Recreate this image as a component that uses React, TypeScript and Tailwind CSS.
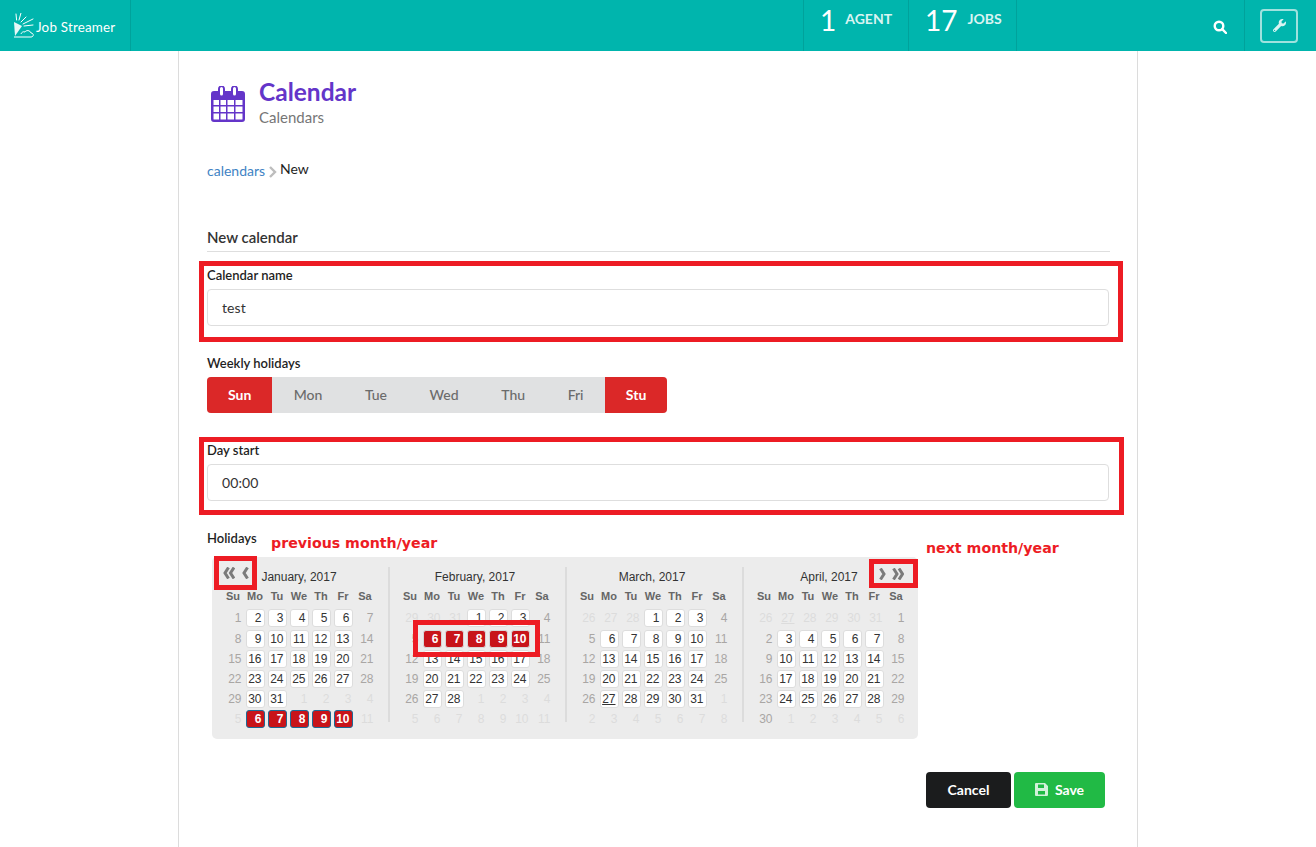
import { FaWrench } from "react-icons/fa";

const weekdays = ["Su", "Mo", "Tu", "We", "Th", "Fr", "Sa"];

type Day = { n: number; kind: "off" | "weekend" | "open" | "selected" | "selected-plain" | "today" | "faint-today" };

const off = (...ns: number[]): Day[] => ns.map((n) => ({ n, kind: "off" }));
const we = (n: number): Day => ({ n, kind: "weekend" });
const open = (...ns: number[]): Day[] => ns.map((n) => ({ n, kind: "open" }));
const sel = (...ns: number[]): Day[] => ns.map((n) => ({ n, kind: "selected" }));
const selPlain = (...ns: number[]): Day[] => ns.map((n) => ({ n, kind: "selected-plain" }));

const months: { title: string; shift: string; rows: Day[][] }[] = [
  {
    title: "January, 2017",
    shift: "",
    rows: [
      [we(1), ...open(2, 3, 4, 5, 6), we(7)],
      [we(8), ...open(9, 10, 11, 12, 13), we(14)],
      [we(15), ...open(16, 17, 18, 19, 20), we(21)],
      [we(22), ...open(23, 24, 25, 26, 27), we(28)],
      [we(29), ...open(30, 31), ...off(1, 2, 3, 4)],
      [...off(5), ...sel(6, 7, 8, 9, 10), ...off(11)],
    ],
  },
  {
    title: "February, 2017",
    shift: "-translate-x-[1px]",
    rows: [
      [...off(29, 30, 31), ...open(1, 2, 3), we(4)],
      [we(5), ...selPlain(6, 7, 8, 9, 10), we(11)],
      [we(12), ...open(13, 14, 15, 16, 17), we(18)],
      [we(19), ...open(20, 21, 22, 23, 24), we(25)],
      [we(26), ...open(27, 28), ...off(1, 2, 3, 4)],
      off(5, 6, 7, 8, 9, 10, 11),
    ],
  },
  {
    title: "March, 2017",
    shift: "-translate-x-[1px]",
    rows: [
      [...off(26, 27, 28), ...open(1, 2, 3), we(4)],
      [we(5), ...open(6, 7, 8, 9, 10), we(11)],
      [we(12), ...open(13, 14, 15, 16, 17), we(18)],
      [we(19), ...open(20, 21, 22, 23, 24), we(25)],
      [we(26), { n: 27, kind: "today" }, ...open(28, 29, 30, 31), ...off(1)],
      off(2, 3, 4, 5, 6, 7, 8),
    ],
  },
  {
    title: "April, 2017",
    shift: "-translate-x-[1px]",
    rows: [
      [...off(26), { n: 27, kind: "faint-today" }, ...off(28, 29, 30, 31), we(1)],
      [we(2), ...open(3, 4, 5, 6, 7), we(8)],
      [we(9), ...open(10, 11, 12, 13, 14), we(15)],
      [we(16), ...open(17, 18, 19, 20, 21), we(22)],
      [we(23), ...open(24, 25, 26, 27, 28), we(29)],
      [we(30), ...off(1, 2, 3, 4, 5, 6)],
    ],
  },
];

function Logo() {
  return (
    <svg width="22" height="25" viewBox="0 0 22 25" fill="none" stroke="white" strokeWidth="1" className="shrink-0">
      <path d="M1 9 L9 13 L2 23 Z" fill="white" stroke="none" opacity="0.9" />
      <path d="M3 1 L3.6 7 M8 0 L6 7 M13 4 L8 9 M20 6 L10 11 M20 12 L11 13" strokeLinecap="round" />
      <path d="M1 24 H18 C21 24 21 20 18 20 C17 17 13 17 12 19 C10 18 8 20 8 21" />
    </svg>
  );
}

function CalendarIcon() {
  return (
    <svg width="34" height="38" viewBox="0 0 34 38" className="shrink-0 text-[#6435c9]">
      <path
        fill="currentColor"
        fillRule="evenodd"
        d="M3 5 H7 V3 a3.5 3.5 0 0 1 7 0 V5 H20 V3 a3.5 3.5 0 0 1 7 0 V5 H31 a3 3 0 0 1 3 3 V33 a3 3 0 0 1 -3 3 H3 a3 3 0 0 1 -3 -3 V8 a3 3 0 0 1 3 -3 Z M9 2.5 V8 a1.5 1.5 0 0 0 3 0 V2.5 a1.5 1.5 0 0 0 -3 0 Z M22 2.5 V8 a1.5 1.5 0 0 0 3 0 V2.5 a1.5 1.5 0 0 0 -3 0 Z M2.5 14 V19 H8 V14 Z M9.5 14 V19 H15 V14 Z M16.5 14 V19 H23 V14 Z M24.5 14 V19 H31.5 V14 Z M2.5 20.5 V26 H8 V20.5 Z M9.5 20.5 V26 H15 V20.5 Z M16.5 20.5 V26 H23 V20.5 Z M24.5 20.5 V26 H31.5 V20.5 Z M2.5 27.5 V33 a0.5 0.5 0 0 0 0.5 0.5 H8 V27.5 Z M9.5 27.5 V33.5 H15 V27.5 Z M16.5 27.5 V33.5 H23 V27.5 Z M24.5 27.5 V33.5 H31 a0.5 0.5 0 0 0 0.5 -0.5 V27.5 Z"
      />
    </svg>
  );
}

function Chevron({ dir, double }: { dir: "left" | "right"; double?: boolean }) {
  const d =
    dir === "left"
      ? double
        ? "M5.5 0.5 L2 6 L5.5 11.5 M11 0.5 L7.5 6 L11 11.5"
        : "M5.5 0.5 L2 6 L5.5 11.5"
      : double
        ? "M1.5 0.5 L5 6 L1.5 11.5 M7 0.5 L10.5 6 L7 11.5"
        : "M1.5 0.5 L5 6 L1.5 11.5";
  return (
    <svg width={double ? 12 : 7} height="12" viewBox={double ? "0 0 12 12" : "0 0 7 12"} fill="none" stroke="#7b7b7b" strokeWidth="3">
      <path d={d} />
    </svg>
  );
}

function DayCell({ day }: { day: Day }) {
  const base = "h-[18px] w-[19px] flex items-center text-[12px] leading-none";
  if (day.kind === "off" || day.kind === "faint-today") {
    return (
      <div className={`${base} mx-auto justify-end pr-[1px] text-[#dcdcdc] ${day.kind === "faint-today" ? "underline" : ""}`}>
        {day.n}
      </div>
    );
  }
  if (day.kind === "weekend") {
    return <div className={`${base} mx-auto justify-end pr-[1px] text-[#a9a6a4]`}>{day.n}</div>;
  }
  if (day.kind === "selected" || day.kind === "selected-plain") {
    return (
      <div
        className={`${base} mx-auto justify-end pr-[2px] rounded-[3px] border bg-[#c8141a] font-bold text-white ${day.kind === "selected" ? "border-[#1d6a96]" : "border-[#d8d8d8]"}`}
      >
        {day.n}
      </div>
    );
  }
  return (
    <div
      className={`${base} mx-auto justify-end pr-[2px] rounded-[3px] border border-[#dddddd] bg-white text-[#333] ${day.kind === "today" ? "underline" : ""}`}
    >
      {day.n}
    </div>
  );
}

function MonthTable({ month, index }: { month: (typeof months)[number]; index: number }) {
  return (
    <div className={`h-[155px] shrink-0 ${index > 0 ? "w-[177px] border-l-2 border-[#dcdcdc] pl-[9px]" : "w-[176px] pl-[10px]"}`}>
      <div className={`h-[20px] w-[154px] text-center text-[12px] leading-[20px] text-[#333] ${month.shift}`}>{month.title}</div>
      <div className="grid h-[20px] grid-cols-[repeat(7,22px)] items-center pb-[2px] text-center text-[11px] font-bold text-[#666]">
        {weekdays.map((w) => (
          <div key={w}>{w}</div>
        ))}
      </div>
      <div className="flex flex-col">
        {month.rows.map((row, i) => (
          <div key={i} className={`grid grid-cols-[repeat(7,22px)] items-center ${i === 0 ? "h-[22px]" : "h-[20px]"}`}>
            {row.map((d, j) => (
              <DayCell key={j} day={d} />
            ))}
          </div>
        ))}
      </div>
    </div>
  );
}

const weeklyDays = [
  { label: "Sun", on: true },
  { label: "Mon", on: false },
  { label: "Tue", on: false },
  { label: "Wed", on: false },
  { label: "Thu", on: false },
  { label: "Fri", on: false },
  { label: "Stu", on: true },
];

export default function App() {
  return (
    <div className="min-h-[847px] overflow-hidden bg-white font-['Lato','Open_Sans',sans-serif] text-[14px] text-[#1f1f1f]">
      {/* 上部ナビ */}
      <header className="flex h-[51px] items-stretch bg-[#00b5ad] text-white">
        <div className="flex w-[131px] items-center gap-[1px] border-r border-[#00a29b] pl-[13px] text-[13.4px] tracking-[0.2px]">
          <Logo />
          <span className="pt-[3px]">Job Streamer</span>
        </div>
        <div className="ml-[672px] flex">
          <div className="flex w-[106px] items-start gap-[9px] border-x border-[#00a29b] pl-[16px]">
            <span className="text-[28px] leading-[40px]">1</span>
            <span className="pt-[10px] text-[14px] font-bold leading-[18px] text-[#d9f4f2]">AGENT</span>
          </div>
          <div className="flex w-[108px] items-start gap-[10px] border-r border-[#00a29b] pl-[16px]">
            <span className="text-[28px] leading-[40px]">17</span>
            <span className="pt-[10px] text-[14px] font-bold leading-[18px] text-[#d9f4f2]">JOBS</span>
          </div>
        </div>
        <div className="flex w-[227px] items-center justify-end pr-[17px] pt-[3px]">
          <svg width="14" height="14" viewBox="0 0 14 14" fill="none" stroke="white" strokeWidth="2.4">
            <circle cx="6" cy="6" r="4.3" />
            <path d="M9.2 9.2 L13 13" strokeLinecap="round" />
          </svg>
        </div>
        <div className="flex flex-1 items-center border-l border-[#00a29b] pl-[15px]">
          <div className="flex h-[34px] w-[38px] items-center justify-center rounded-[4px] border-2 border-[#9fe2de]">
            <FaWrench size={13} className="text-[#d9f4f2]" />
          </div>
        </div>
      </header>

      {/* 本体 */}
      <main className="relative ml-[178px] h-[796px] w-[960px] border-x border-[#dcdcdc] pl-[28px] pr-[28px]">
        <div className="flex items-start gap-[14px] pl-[4px] pt-[35px]">
          <CalendarIcon />
          <div className="-mt-[9px]">
            <h1 className="text-[24.5px] font-bold leading-[30px] text-[#6435c9]">Calendar</h1>
            <p className="text-[15px] leading-[20px] text-[#767676]">Calendars</p>
          </div>
        </div>

        <div className="mt-[34px] flex items-center text-[14px] leading-[20px]">
          <a className="text-[#4183c4]">calendars</a>
          <svg width="9" height="12" viewBox="0 0 9 12" fill="none" stroke="#bdbdbd" strokeWidth="2.4" className="ml-[3px] mr-[3px] mt-[1px]">
            <path d="M2 1 L7 6 L2 11" />
          </svg>
          <span className="-mt-[4px] text-[#1f1f1f]">New</span>
        </div>

        <h2 className="mt-[45px] w-[903px] border-b border-[#dedede] pb-[3px] text-[15px] font-semibold leading-[22px] text-[#333]">
          New calendar
        </h2>

        <div className="mt-[14px] w-[902px]">
          <label className="block text-[13px] font-semibold leading-[18px]">Calendar name</label>
          <div className="mt-[5px] flex h-[37px] items-center rounded-[4px] border border-[#dedede] pl-[14px] text-[14px] tracking-[0.1px] text-[#333]">
            test
          </div>
        </div>

        <div className="mt-[28px]">
          <label className="block text-[13px] font-semibold leading-[18px]">Weekly holidays</label>
          <div className="mt-[5px] inline-flex h-[36px] overflow-hidden rounded-[4px] bg-[#e0e1e2]">
            {weeklyDays.map((d) => (
              <div
                key={d.label}
                className={`flex items-center pb-[1px] text-[14px] ${d.on ? "bg-[#db2828] px-[21px] font-bold text-white" : "px-[21.3px] font-medium text-[#6b6b6b]"}`}
              >
                {d.label}
              </div>
            ))}
          </div>
        </div>

        <div className="mt-[28px] w-[902px]">
          <label className="block text-[13px] font-semibold leading-[18px]">Day start</label>
          <div className="mt-[5px] flex h-[37px] items-center rounded-[4px] border border-[#dedede] pl-[14px] text-[14px] tracking-[0.1px] text-[#333]">
            00:00
          </div>
        </div>

        <div className="mt-[28px]">
          <label className="block text-[13px] font-semibold leading-[18px]">Holidays</label>
          <div className="ml-[5px] mt-[10px] flex h-[182px] w-[706px] rounded-[5px] bg-[#ececec] pt-[10px] font-['Liberation_Sans',Arial,sans-serif]">
            {months.map((m, i) => (
              <MonthTable key={m.title} month={m} index={i} />
            ))}
          </div>
        </div>

        <div className="absolute left-[747px] top-[721px] flex gap-[3px]">
          <button className="h-[36px] w-[85px] rounded-[4px] bg-[#1b1c1d] pb-[1px] text-[14px] font-bold text-white">Cancel</button>
          <button className="flex h-[36px] w-[91px] items-center justify-center gap-[7px] rounded-[4px] bg-[#21ba45] pb-[1px] text-[14px] font-bold text-white">
            <svg width="13" height="13" viewBox="0 0 13 13" className="opacity-80">
              <path
                fill="white"
                fillRule="evenodd"
                d="M1 0 H10 L13 3 V12 a1 1 0 0 1 -1 1 H1 a1 1 0 0 1 -1 -1 V1 a1 1 0 0 1 1 -1 Z M3 1.5 V5 H9 V1.5 Z M3 8 V11.5 H10 V8 Z"
              />
            </svg>
            Save
          </button>
        </div>

        {/* 赤枠の注釈 */}
        <div className="absolute left-[20px] top-[210px] h-[81px] w-[924px] border-[5px] border-[#ed1c24]" />
        <div className="absolute left-[20px] top-[386px] h-[78px] w-[925px] border-[5px] border-[#ed1c24]" />
        <div className="absolute left-[35px] top-[505px] flex h-[34px] w-[43px] items-center gap-[7px] border-[5px] border-[#ed1c24] pl-[4px]">
          <Chevron dir="left" double />
          <Chevron dir="left" />
        </div>
        <div className="absolute left-[690px] top-[508px] flex h-[29px] w-[49px] items-center gap-[6px] border-[5px] border-[#ed1c24] pl-[5px]">
          <Chevron dir="right" />
          <Chevron dir="right" double />
        </div>
        <div className="absolute left-[234px] top-[569px] h-[37px] w-[127px] border-[5px] border-[#ed1c24]" />
        <div className="absolute left-[92px] top-[481px] font-['DejaVu_Sans',Verdana,sans-serif] text-[14.2px] font-bold leading-[22px] text-[#ed1c24]">
          previous month/year
        </div>
        <div className="absolute left-[747px] top-[486px] font-['DejaVu_Sans',Verdana,sans-serif] text-[14.2px] font-bold leading-[22px] text-[#ed1c24]">
          next month/year
        </div>
      </main>
    </div>
  );
}
